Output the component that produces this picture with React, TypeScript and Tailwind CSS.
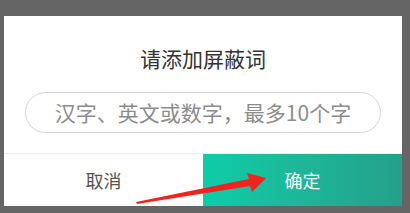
export default function App() {
  return (
    <div className="w-[410px] h-[213px] bg-[#656565] pt-[16px] pl-[4px] overflow-hidden" style={{ fontFamily: '"Noto Sans CJK SC", "Noto Sans", sans-serif' }}>
      <div className="relative w-[398px] h-[190px] bg-white flex flex-col">
        <div className="pt-[28px] h-[72px] text-center text-[21px] leading-[28px] text-[#333]">请添加屏蔽词</div>
        <div className="mx-[21px] mt-[4px] h-[41px] rounded-full border border-[#d6d6d6] flex items-center justify-center text-[21px] text-[#8c8c8c]">
          汉字、英文或数字，最多10个字
        </div>
        <div className="mt-auto h-[53px] border-t border-[#eeeeee] flex">
          <div className="w-[199px] flex items-center justify-center text-[18px] text-[#555]">取消</div>
          <div className="flex-1 flex items-center justify-center text-[18px] text-white bg-gradient-to-r from-[#0ccda8] to-[#24a08a]">确定</div>
        </div>
        <svg className="absolute left-[-4px] top-[-16px] pointer-events-none" width="410" height="213" viewBox="0 0 410 213">
          <polygon points="136,202 249,179 247,173 266,178 252,192 250,186 137,204" fill="#f2231c" />
        </svg>
      </div>
    </div>
  );
}
